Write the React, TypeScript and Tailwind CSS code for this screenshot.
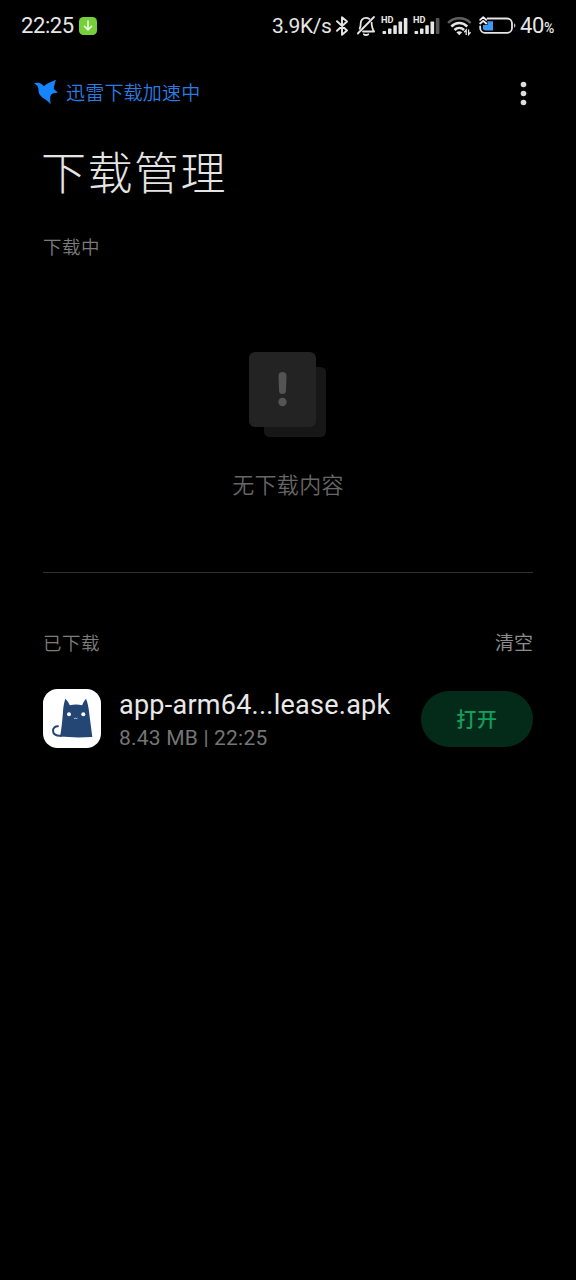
const LATIN = "font-['Roboto','Noto_Sans_CJK_SC',sans-serif]";
const CJK = "font-['Noto_Sans_CJK_SC',sans-serif]";

function InstallBadge() {
  return (
    <svg width="18" height="18" viewBox="0 0 18 18" className="shrink-0">
      <rect width="18" height="18" rx="4.5" fill="#76d03c" />
      <path d="M9 4v8.6M5.4 9.3 9 12.9l3.6-3.6" fill="none" stroke="#f4ffe9" strokeWidth="1.5" strokeLinecap="round" strokeLinejoin="round" />
    </svg>
  );
}

function BluetoothIcon() {
  return (
    <svg width="14" height="22" viewBox="0 0 14 22" className="shrink-0" fill="none" stroke="#e6e6e6" strokeWidth="1.9" strokeLinejoin="round" strokeLinecap="round">
      <path d="m2 6.2 10 9.3-5 4.3V2.2l5 4.3-10 9.3" />
    </svg>
  );
}

function MuteIcon() {
  return (
    <svg width="20" height="22" viewBox="0 0 20 22" className="shrink-0" fill="none" stroke="#e6e6e6" strokeWidth="1.8" strokeLinecap="round" strokeLinejoin="round">
      <path d="M3.7 13.7c.8-1.5 1-2.8 1-5.2C4.7 4.8 7 2.8 10 2.8c1.4 0 2.4.4 3.4 1.1M15.6 7.6c.1 4 .4 6.3 2.5 8.9H7" />
      <path d="M1.8 18.5 18 2" />
      <path d="M7.8 19.3c1 .9 3.4.9 4.4 0" />
    </svg>
  );
}

function SignalIcon({ weak = false }: { weak?: boolean }) {
  return (
    <svg width="28" height="28" viewBox="0 -4 28 28" className="shrink-0" fill="#e6e6e6">
      <text x="0" y="7.4" fontSize="9" fontWeight="700" fontFamily="Roboto, sans-serif" textLength="12.5" lengthAdjust="spacingAndGlyphs">HD</text>
      <rect x="1.5" y="15" width="3.6" height="3" rx=".7" />
      <rect x="7" y="12.6" width="3.5" height="5.4" rx=".7" />
      <rect x="12.3" y="9.3" width="3.5" height="8.7" rx=".7" />
      <rect x="17.5" y="5.6" width="3.6" height="12.4" rx=".7" />
      <rect x="22.8" y="2" width="3.6" height="16" rx=".7" fill={weak ? "#555" : "#e6e6e6"} />
    </svg>
  );
}

function WifiIcon() {
  return (
    <svg width="25" height="20" viewBox="0 0 25 20" className="shrink-0" fill="none">
      <path d="M1.1 7C7.2.7 17.4.7 23.5 7" stroke="#606060" strokeWidth="2.5" />
      <path d="M4.3 10.5c4.6-4.6 11.4-4.6 16 0" stroke="#e6e6e6" strokeWidth="2.5" />
      <path d="M7.5 14c2.8-2.8 6.8-2.8 9.6 0" stroke="#e6e6e6" strokeWidth="2.5" />
      <path d="M9.4 16.3c1.7-1.5 4.1-1.5 5.8 0l-2.9 3z" fill="#e6e6e6" />
      <path d="M19.2 19v-5l-2 2.2M21.6 13.5v5l2-2.2" stroke="#e6e6e6" strokeWidth="1.3" />
    </svg>
  );
}

function BatteryIcon() {
  return (
    <svg width="38" height="22" viewBox="0 0 38 22" className="shrink-0" fill="none">
      <path d="M8.5 3.5H28a5 5 0 0 1 5 5V13a4.8 4.8 0 0 1-4.8 4.8H6A4.8 4.8 0 0 1 1.2 13v-1.5" stroke="#e6e6e6" strokeWidth="1.8" strokeLinecap="round" />
      <path d="M8.5 6.2H14v9.3H6.6a2.7 2.7 0 0 1-2.7-2.7v-2.7h4.6z" fill="#3e98f5" />
      <path d="M35.2 8.2c1.6 1 1.6 3.6 0 4.6z" fill="#e6e6e6" />
      <path d="m1.2 4.8 3-2.7 3 2.7M1.2 8.5l3-2.7 3 2.7" stroke="#f2f2f2" strokeWidth="1.8" strokeLinecap="round" strokeLinejoin="round" />
    </svg>
  );
}

function StatusBar() {
  return (
    <div className={`flex h-[52px] items-center pl-[21px] text-[#e6e6e6] ${LATIN}`}>
      <span className="w-[58px] whitespace-nowrap text-[22px] leading-[26px] tracking-[-0.4px]">22:25</span>
      <InstallBadge />
      <span className="ml-[175px] w-[63px] whitespace-nowrap text-[21px] leading-[26px] tracking-[-0.4px]">3.9K/s</span>
      <BluetoothIcon />
      <span className="ml-[7px] flex"><MuteIcon /></span>
      <span className="ml-[5px] flex"><SignalIcon /></span>
      <span className="ml-[4px] flex"><SignalIcon weak /></span>
      <span className="ml-[6px] flex"><WifiIcon /></span>
      <span className="ml-[7px] flex"><BatteryIcon /></span>
      <span className="ml-[3px] mt-[2px] whitespace-nowrap text-[22px] leading-[26px] tracking-[-0.4px]">
        40<span className="text-[14px] font-medium">%</span>
      </span>
    </div>
  );
}

function BirdLogo() {
  return (
    <svg width="24" height="26" viewBox="0 0 24 26" className="shrink-0" fill="#1684fc">
      <path d="M0 4.2c2.8-.9 5.5-.7 7.8 1l2.2 2C12.500 4.600 17.400 2.600 22 .8c-1.200 3.300-2 6.600-2.200 9.200 1.300 1.300 2.700 2.400 4.200 3.600-2.300.1-4.300.5-5.900 1.500-1.400.9-1.800 2-1.900 3.100-.2 2.100.1 4.600.7 7.100-2.400-2.800-5.100-4.700-7.900-6.400C5.500 16.900 4.200 13.900 4.400 9.600 4.300 7.600 2.700 5.600 0 4.200Z" />
    </svg>
  );
}

function EmptyIcon() {
  return (
    <svg width="78" height="86" viewBox="0 0 78 86">
      <rect x="15" y="15" width="62" height="70" rx="5.5" fill="#171717" />
      <rect width="67" height="75" rx="6" fill="#232323" />
      <path d="M29.5 24a4 4 0 0 1 8 0l-.5 14.5a3.5 3.5 0 0 1-7 0z" fill="#545454" />
      <circle cx="33.5" cy="50" r="4.2" fill="#545454" />
    </svg>
  );
}

function CatIcon() {
  return (
    <svg width="58" height="59" viewBox="0 0 58 59" className="shrink-0">
      <rect width="58" height="59" rx="14.5" fill="#fff" />
      <path d="M18.5 46.7C13 47.5 10 44.9 10 41.7c0-2.7 2-4.6 4.9-4.5" fill="none" stroke="#234675" strokeWidth="2" strokeLinecap="round" />
      <path d="M22.4 9.7c1.9 1.9 3.3 4 4.4 6.5 4-.8 8.3-.8 12.3 0 1-2.5 2.2-4.6 3.9-6.5 1.7 4 2.5 8.2 3 12.8L49.3 48c-10.3.6-21.9.6-32.2-.4 1.5-8.5 2.3-16.6 2.9-25 .3-4.7 1-8.9 2.4-12.9Z" fill="#234675" />
      <circle cx="26" cy="25.3" r="2" fill="#fff" />
      <circle cx="40.3" cy="25.3" r="2" fill="#fff" />
      <path d="M30.9 29.2q.9.8 1.8 0q.9.8 1.8 0" fill="none" stroke="#dce6f4" strokeWidth=".8" />
    </svg>
  );
}

function Header() {
  return (
    <header className="flex h-20 items-center pl-[34px] pr-[42px]">
      <BirdLogo />
      <span className={`ml-[8px] whitespace-nowrap text-[19px] leading-7 font-[350] tracking-[0.2px] text-[#2c7ce0] ${CJK}`}>迅雷下载加速中</span>
      <svg width="20" height="26" viewBox="0 0 20 26" className="mt-[3px] ml-auto" fill="#dedede">
        <circle cx="9.5" cy="3.5" r="2.8" />
        <circle cx="9.5" cy="12.5" r="2.8" />
        <circle cx="9.5" cy="21.5" r="2.8" />
      </svg>
    </header>
  );
}

export default function App() {
  return (
    <div className={`flex h-[1280px] w-[576px] flex-col overflow-hidden bg-black ${CJK}`}>
      <StatusBar />
      <Header />

      <main className="flex flex-col px-[43px]">
        <h1 className="-ml-[2px] mt-[6px] h-[66px] whitespace-nowrap text-[45px] leading-[66px] font-extralight tracking-[1.5px] text-[#e4e4e4]">下载管理</h1>

        <h2 className="mt-[28px] h-7 whitespace-nowrap text-[18.5px] font-[350] leading-7 tracking-[0.5px] text-[#7c7c7c]">下载中</h2>

        <div className="mt-[92px] flex flex-col items-center">
          <div className="mr-[1px] h-[86px]"><EmptyIcon /></div>
          <p className="mt-[29px] h-8 whitespace-nowrap text-[22px] font-[350] leading-8 tracking-[0.3px] text-[#666]">无下载内容</p>
        </div>

        <div className="mt-[73px] h-px bg-[#2d2d2d]" />

        <div className="mt-[55px] flex h-7 items-center justify-between whitespace-nowrap leading-7">
          <h2 className="text-[18.5px] font-[350] tracking-[0.5px] text-[#7c7c7c]">已下载</h2>
          <button className="text-[19px] text-[#8c8c8c]">清空</button>
        </div>

        <div className="mt-[33px] flex h-[59px] items-center">
          <CatIcon />
          <div className={`ml-[18px] w-[302px] pt-px whitespace-nowrap ${LATIN}`}>
            <p className="h-8 text-[27px] leading-8 tracking-[0.25px] text-[#e8e8e8]">app-arm64...lease.apk</p>
            <p className="mt-[5px] h-6 text-[21px] leading-6 tracking-[0.2px] text-[#757575]">8.43 MB | 22:25</p>
          </div>
          <button className="h-[56px] w-[112px] shrink-0 rounded-full bg-[#042b19] text-[20px] font-medium leading-7 tracking-[0.8px] text-[#159d5d]">打开</button>
        </div>
      </main>
    </div>
  );
}
